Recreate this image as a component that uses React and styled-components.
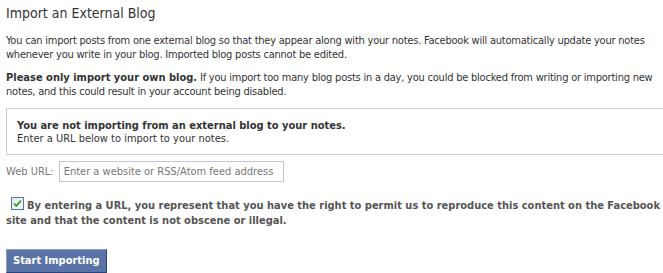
import React from "react";
import styled, { createGlobalStyle } from "styled-components";

const GlobalStyle = createGlobalStyle`
  body {
    margin: 0;
    background: #fff;
    font-family: "DejaVu Sans Condensed", "DejaVu Sans", sans-serif;
    font-size: 11px;
    color: #333;
  }
`;

const Page = styled.div`
  width: 663px;
  height: 273px;
  overflow: hidden;
  padding: 5px 0 0 6px;
  box-sizing: border-box;
`;

const Title = styled.h2`
  margin: 0 0 12px;
  font-size: 14px;
  font-weight: normal;
  color: #333;
  line-height: 17px;
`;

const Para = styled.p`
  margin: 0 0 9px;
  line-height: 14px;
  color: #333;
  white-space: nowrap;
  letter-spacing: -0.22px;
`;

const Strong = styled.strong`
  font-weight: bold;
  color: #333;
  letter-spacing: 0;
`;

const StatusBox = styled.div`
  margin: 0 -10px 6px 0;
  padding: 10px 10px 9px 10px;
  border: 1px solid #ccc;
  line-height: 13px;
`;

const UrlRow = styled.div`
  display: flex;
  align-items: center;
  gap: 5px;
  margin-bottom: 15px;
`;

const Label = styled.label`
  color: #777;
`;

const UrlInput = styled.input`
  width: 225px;
  height: 21px;
  box-sizing: border-box;
  border: 1px solid #bdc7d8;
  padding: 2px 4px;
  font: inherit;
  color: #777;
  &::placeholder {
    color: #777;
  }
`;

const Terms = styled.div`
  line-height: 15px;
  font-weight: bold;
  color: #555;
  margin-bottom: 21px;
`;

const CheckBox = styled.span`
  display: inline-flex;
  align-items: center;
  justify-content: center;
  width: 11px;
  height: 11px;
  margin: 0 3px 0 5px;
  vertical-align: 1px;
  border: 1px solid #4a7a9c;
  background: linear-gradient(135deg, #e4e7ec, #fbfbfb);
`;

const Button = styled.button`
  font: inherit;
  font-weight: bold;
  font-size: 11px;
  color: #fff;
  background: #5b74a8;
  border: 1px solid;
  border-color: #8a9cc2 #29447e #29447e #8a9cc2;
  padding: 4px 6px 4px;
  line-height: 14px;
`;

export default function App() {
  return (
    <>
      <GlobalStyle />
      <Page>
        <Title>Import an External Blog</Title>
        <Para>
          You can import posts from one external blog so that they appear along with your notes. Facebook will automatically update your notes
          <br />
          whenever you write in your blog. Imported blog posts cannot be edited.
        </Para>
        <Para>
          <Strong>Please only import your own blog.</Strong> If you import too many blog posts in a day, you could be blocked from writing or importing new
          <br />
          notes, and this could result in your account being disabled.
        </Para>
        <StatusBox>
          <Strong>You are not importing from an external blog to your notes.</Strong>
          <br />
          Enter a URL below to import to your notes.
        </StatusBox>
        <UrlRow>
          <Label htmlFor="url">Web URL:</Label>
          <UrlInput id="url" placeholder="Enter a website or RSS/Atom feed address" />
        </UrlRow>
        <Terms>
          <CheckBox role="checkbox" aria-checked="true">
            <svg width="9" height="9" viewBox="0 0 9 9">
              <path d="M1 4.5 L3.3 7 L8 1.5" fill="none" stroke="#21a121" strokeWidth="1.8" />
            </svg>
          </CheckBox>
          By entering a URL, you represent that you have the right to permit us to reproduce this content on the Facebook
          <br />
          site and that the content is not obscene or illegal.
        </Terms>
        <Button>Start Importing</Button>
      </Page>
    </>
  );
}
